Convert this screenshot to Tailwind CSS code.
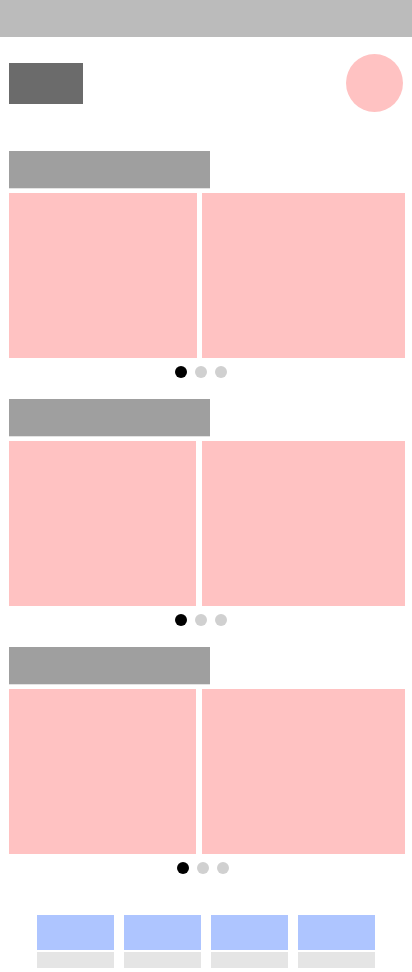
<!DOCTYPE html>
<html lang="en">
<head>
<meta charset="utf-8">
<meta name="viewport" content="width=device-width, initial-scale=1">
<title>Home</title>
<script src="https://cdn.jsdelivr.net/npm/@tailwindcss/browser@4"></script>
</head>
<body class="bg-white font-['Roboto',sans-serif]">
  <div class="h-[37px] bg-[#bbbbbb]"></div>

  <header class="flex items-center justify-between px-[9px] pt-[17px]">
    <a href="#" aria-label="Home" class="block h-[41px] w-[74px] bg-[#6b6b6b]"></a>
    <button type="button" aria-label="Profile" class="h-[58px] w-[57px] rounded-[50%] bg-[#ffc2c2]"></button>
  </header>

  <main class="flex flex-col gap-[21px] pt-[39px] pr-[7px] pl-[9px]">
    <section>
      <h2 class="h-[38px] w-[201px] border-b border-[#e3e3e3] bg-[#9f9f9f]"></h2>
      <div class="mt-1 grid h-[165px] grid-cols-[188fr_203fr] gap-[5px]">
        <article class="bg-[#ffc2c2]"></article>
        <article class="bg-[#ffc2c2]"></article>
      </div>
      <div class="mt-2 flex justify-center gap-2 pr-3">
        <button type="button" aria-label="Page 1" class="size-3 rounded-full bg-black"></button>
        <button type="button" aria-label="Page 2" class="size-3 rounded-full bg-[#d0d0d0]"></button>
        <button type="button" aria-label="Page 3" class="size-3 rounded-full bg-[#d0d0d0]"></button>
      </div>
    </section>

    <section>
      <h2 class="h-[38px] w-[201px] border-b border-[#e3e3e3] bg-[#9f9f9f]"></h2>
      <div class="mt-1 grid h-[165px] grid-cols-[187fr_203fr] gap-[6px]">
        <article class="bg-[#ffc2c2]"></article>
        <article class="bg-[#ffc2c2]"></article>
      </div>
      <div class="mt-2 flex justify-center gap-2 pr-3">
        <button type="button" aria-label="Page 1" class="size-3 rounded-full bg-black"></button>
        <button type="button" aria-label="Page 2" class="size-3 rounded-full bg-[#d0d0d0]"></button>
        <button type="button" aria-label="Page 3" class="size-3 rounded-full bg-[#d0d0d0]"></button>
      </div>
    </section>

    <section>
      <h2 class="h-[38px] w-[201px] border-b border-[#e3e3e3] bg-[#9f9f9f]"></h2>
      <div class="mt-1 grid h-[165px] grid-cols-[187fr_203fr] gap-[6px]">
        <article class="bg-[#ffc2c2]"></article>
        <article class="bg-[#ffc2c2]"></article>
      </div>
      <div class="mt-2 flex justify-center gap-2 pr-2">
        <button type="button" aria-label="Page 1" class="size-3 rounded-full bg-black"></button>
        <button type="button" aria-label="Page 2" class="size-3 rounded-full bg-[#d0d0d0]"></button>
        <button type="button" aria-label="Page 3" class="size-3 rounded-full bg-[#d0d0d0]"></button>
      </div>
    </section>
  </main>

  <nav aria-label="Main" class="grid grid-cols-4 gap-[10px] px-[37px] pt-[41px] pb-1">
    <a href="#" aria-label="Tab 1" class="flex flex-col gap-[2px]"><span class="h-[35px] bg-[#aec5ff]"></span><span class="h-4 bg-[#e5e5e5]"></span></a>
    <a href="#" aria-label="Tab 2" class="flex flex-col gap-[2px]"><span class="h-[35px] bg-[#aec5ff]"></span><span class="h-4 bg-[#e5e5e5]"></span></a>
    <a href="#" aria-label="Tab 3" class="flex flex-col gap-[2px]"><span class="h-[35px] bg-[#aec5ff]"></span><span class="h-4 bg-[#e5e5e5]"></span></a>
    <a href="#" aria-label="Tab 4" class="flex flex-col gap-[2px]"><span class="h-[35px] bg-[#aec5ff]"></span><span class="h-4 bg-[#e5e5e5]"></span></a>
  </nav>
</body>
</html>
